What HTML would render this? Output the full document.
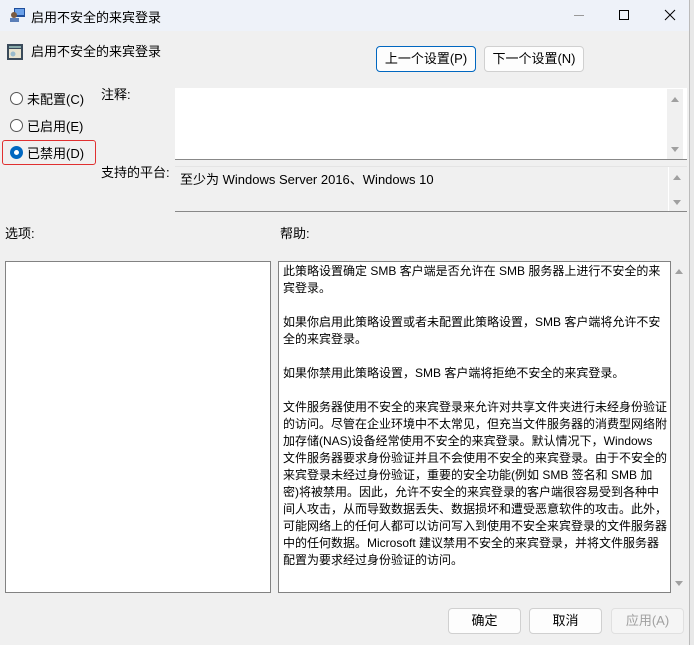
<!DOCTYPE html>
<html><head><meta charset="utf-8"><style>
*{box-sizing:border-box;margin:0;padding:0}
body{width:694px;height:645px;background:#f0f0f0;font-family:"Liberation Sans","Noto Sans CJK SC",sans-serif;font-size:13px;color:#000;position:relative;overflow:hidden}
.abs{position:absolute}
.title{left:0;top:0;width:694px;height:31px;background:#eef2f9}
.btn{position:absolute;height:26px;border:1px solid #d0d0d0;border-radius:4px;background:#fdfdfd;text-align:center;line-height:24px;font-size:13px}
.radio{position:absolute;width:13px;height:13px;border:1px solid #555;border-radius:50%;background:#fff}
.box{position:absolute;background:#fff;border-bottom:1px solid #888}
.sb{position:absolute;width:16px;background:#f0f0f0}
.arr{position:absolute;left:4px;width:0;height:0;border-left:4px solid transparent;border-right:4px solid transparent}
.up{border-bottom:5px solid #a0a0a0}.dn{border-top:5px solid #a0a0a0}
.help{left:278px;top:261px;width:393px;height:332px;background:#fff;border:1px solid #828282;padding:1px 0 0 4px;line-height:17px;font-size:12px;white-space:nowrap;overflow:hidden}
</style></head><body>
<div class="abs title"></div>
<svg class="abs" style="left:9px;top:7px" width="17" height="16"><rect x="5" y="1" width="11" height="9" fill="#1e4e9c"/><rect x="6" y="2" width="9" height="6" fill="#6aa0e8"/><circle cx="5" cy="8" r="3" fill="#7a5a40"/><rect x="1" y="11" width="9" height="4" fill="#5b7fb8"/></svg>
<div class="abs" style="left:31px;top:7px;font-size:13px">启用不安全的来宾登录</div>
<div class="abs" style="left:574px;top:15px;width:10px;height:1px;background:#999"></div>
<div class="abs" style="left:619px;top:10px;width:10px;height:10px;border:1px solid #000"></div>
<svg class="abs" style="left:664px;top:9px" width="12" height="12"><path d="M1 1L11 11M11 1L1 11" stroke="#000" stroke-width="1"/></svg>
<div class="abs" style="left:689px;top:0;width:5px;height:645px;background:#e8e8e8;border-left:1px solid #bbb"></div>
<svg class="abs" style="left:7px;top:44px" width="16" height="16"><rect x="0" y="0" width="16" height="16" fill="#3a4a5a"/><rect x="2" y="5" width="12" height="9" fill="#e8e4d0"/><rect x="2" y="2" width="12" height="2" fill="#8aa"/><circle cx="6" cy="10" r="2.5" fill="#9bc"/></svg>
<div class="abs" style="left:31px;top:41px">启用不安全的来宾登录</div>
<div class="btn" style="left:376px;top:46px;width:100px;border-color:#0067c0">上一个设置(P)</div>
<div class="btn" style="left:484px;top:46px;width:100px">下一个设置(N)</div>
<div class="radio" style="left:10px;top:92px"></div><div class="abs" style="left:27px;top:89px">未配置(C)</div>
<div class="radio" style="left:10px;top:119px"></div><div class="abs" style="left:27px;top:116px">已启用(E)</div>
<div class="radio" style="left:10px;top:146px;border:4px solid #0067c0"></div><div class="abs" style="left:27px;top:143px">已禁用(D)</div>
<div class="abs" style="left:2px;top:140px;width:94px;height:25px;border:1px solid #e03030;border-radius:3px"></div>
<div class="abs" style="left:101px;top:84px">注释:</div>
<div class="abs" style="left:101px;top:162px">支持的平台:</div>
<div class="box" style="left:175px;top:88px;width:512px;height:72px"></div>
<div class="sb" style="left:667px;top:89px;height:70px"><div class="arr up" style="top:8px"></div><div class="arr dn" style="top:58px"></div></div>
<div class="box" style="left:175px;top:166px;width:512px;height:46px;background:#f0f0f0;border-top:1px solid #e4e4e4"></div>
<div class="abs" style="left:180px;top:169px">至少为 Windows Server 2016、Windows 10</div>
<div class="sb" style="left:668px;top:167px;height:44px;border-left:1px solid #fff"><div class="arr up" style="top:8px"></div><div class="arr dn" style="top:33px"></div></div>
<div class="abs" style="left:5px;top:223px">选项:</div>
<div class="abs" style="left:280px;top:223px">帮助:</div>
<div class="abs" style="left:5px;top:261px;width:266px;height:332px;background:#fff;border:1px solid #828282"></div>
<div class="abs help">此策略设置确定 SMB 客户端是否允许在 SMB 服务器上进行不安全的来<br>宾登录。<br><br>如果你启用此策略设置或者未配置此策略设置，SMB 客户端将允许不安<br>全的来宾登录。<br><br>如果你禁用此策略设置，SMB 客户端将拒绝不安全的来宾登录。<br><br>文件服务器使用不安全的来宾登录来允许对共享文件夹进行未经身份验证<br>的访问。尽管在企业环境中不太常见，但充当文件服务器的消费型网络附<br>加存储(NAS)设备经常使用不安全的来宾登录。默认情况下，Windows<br>文件服务器要求身份验证并且不会使用不安全的来宾登录。由于不安全的<br>来宾登录未经过身份验证，重要的安全功能(例如 SMB 签名和 SMB 加<br>密)将被禁用。因此，允许不安全的来宾登录的客户端很容易受到各种中<br>间人攻击，从而导致数据丢失、数据损坏和遭受恶意软件的攻击。此外，<br>可能网络上的任何人都可以访问写入到使用不安全来宾登录的文件服务器<br>中的任何数据。Microsoft 建议禁用不安全的来宾登录，并将文件服务器<br>配置为要求经过身份验证的访问。</div>
<div class="sb" style="left:671px;top:261px;height:332px"><div class="arr up" style="top:8px"></div><div class="arr dn" style="top:320px"></div></div>
<div class="btn" style="left:448px;top:608px;width:73px">确定</div>
<div class="btn" style="left:529px;top:608px;width:73px">取消</div>
<div class="btn" style="left:611px;top:608px;width:73px;color:#a0a0a0;border-color:#e0e0e0;background:#f5f5f5">应用(A)</div>
</body></html>
